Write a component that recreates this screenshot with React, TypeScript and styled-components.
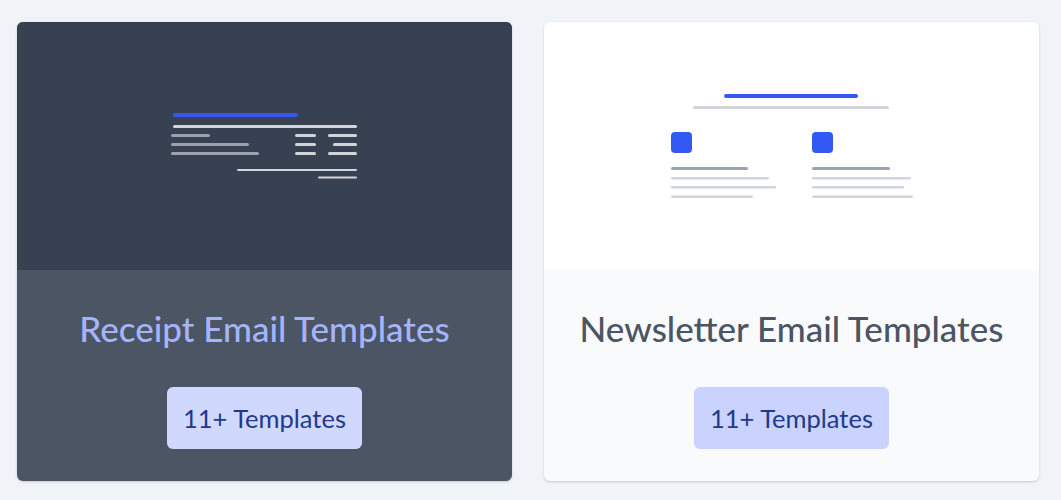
import React from 'react';
import styled, { createGlobalStyle } from 'styled-components';

const GlobalStyle = createGlobalStyle`
  body {
    margin: 0;
    background: #f0f3f7;
    font-family: 'Lato', 'Noto Sans', sans-serif;
  }
`;

const Page = styled.main`
  display: grid;
  grid-template-columns: 1fr 1fr;
  gap: 32px;
  padding: 22px 22px 19px 17px;
`;

const Card = styled.section<{ $dark?: boolean }>`
  display: flex;
  flex-direction: column;
  border-radius: 6px;
  overflow: hidden;
  box-shadow: 0 1px 3px rgba(15, 23, 42, 0.12), 0 1px 2px rgba(15, 23, 42, 0.06);
  background: ${(p) => (p.$dark ? '#4b5563' : '#f9fafb')};
`;

const Preview = styled.div<{ $dark?: boolean }>`
  height: 248px;
  display: flex;
  align-items: center;
  justify-content: center;
  background: ${(p) => (p.$dark ? '#374151' : '#ffffff')};
`;

const Body = styled.div`
  display: flex;
  flex-direction: column;
  align-items: center;
  padding: 36px 16px 32px;
  gap: 37px;
`;

const Title = styled.h2<{ $dark?: boolean }>`
  margin: 0;
  font-size: 35px;
  line-height: 44px;
  font-weight: 500;
  color: ${(p) => (p.$dark ? '#a5b4fc' : '#4b5563')};
`;

const Badge = styled.span<{ $dark?: boolean }>`
  display: inline-flex;
  align-items: center;
  height: 62px;
  padding: 0 16px;
  box-sizing: border-box;
  border-radius: 6px;
  font-size: 25.5px;
  color: #1e3a8a;
  background: ${(p) => (p.$dark ? '#d0d8fe' : '#c9d3fd')};
`;

const BLUE = '#3358f4';
const LIGHT = '#d1d5db';
const MID = '#9ca3af';

const ReceiptPreview = () => (
  <svg width="190" height="70" viewBox="0 0 190 70">
    <rect x="3" y="2" width="125" height="4" rx="2" fill={BLUE} />
    <rect x="3" y="14" width="184" height="3" rx="1.5" fill={LIGHT} />
    <rect x="1" y="23" width="39" height="3" rx="1.5" fill={MID} />
    <rect x="1" y="32" width="78" height="3" rx="1.5" fill={MID} />
    <rect x="1" y="41" width="88" height="3" rx="1.5" fill={MID} />
    <rect x="125" y="23" width="21" height="3" rx="1.5" fill={LIGHT} />
    <rect x="125" y="32" width="21" height="3" rx="1.5" fill={LIGHT} />
    <rect x="125" y="41" width="21" height="3" rx="1.5" fill={LIGHT} />
    <rect x="158" y="23" width="29" height="3" rx="1.5" fill={LIGHT} />
    <rect x="163" y="32" width="24" height="3" rx="1.5" fill={LIGHT} />
    <rect x="158" y="41" width="29" height="3" rx="1.5" fill={LIGHT} />
    <rect x="67" y="58" width="120" height="2" rx="1" fill={LIGHT} />
    <rect x="148" y="65.5" width="39" height="2" rx="1" fill={LIGHT} />
  </svg>
);

const NewsletterPreview = () => (
  <svg width="248" height="108" viewBox="0 0 248 108">
    <rect x="56" y="2" width="134" height="4" rx="2" fill={BLUE} />
    <rect x="25" y="14" width="196" height="3" rx="1.5" fill={LIGHT} />
    {[3, 144].map((x, i) => (
      <g key={x}>
        <rect x={x} y="40" width="21" height="21" rx="4" fill={BLUE} />
        <rect x={x} y="75" width={i ? 78 : 77} height="3" rx="1.5" fill={MID} />
        <rect x={x} y="85" width={i ? 99 : 98} height="2.5" rx="1.25" fill={LIGHT} />
        <rect x={x} y="94" width={i ? 92 : 105} height="2.5" rx="1.25" fill={LIGHT} />
        <rect x={x} y="103.5" width={i ? 101 : 82} height="2.5" rx="1.25" fill={LIGHT} />
      </g>
    ))}
  </svg>
);

const templates = [
  { title: 'Receipt Email Templates', count: '11+ Templates', dark: true, art: <ReceiptPreview /> },
  { title: 'Newsletter Email Templates', count: '11+ Templates', dark: false, art: <NewsletterPreview /> },
];

export default function App() {
  return (
    <>
      <GlobalStyle />
      <Page>
        {templates.map((t) => (
          <Card key={t.title} $dark={t.dark}>
            <Preview $dark={t.dark}>{t.art}</Preview>
            <Body>
              <Title $dark={t.dark}>{t.title}</Title>
              <Badge $dark={t.dark}>{t.count}</Badge>
            </Body>
          </Card>
        ))}
      </Page>
    </>
  );
}
